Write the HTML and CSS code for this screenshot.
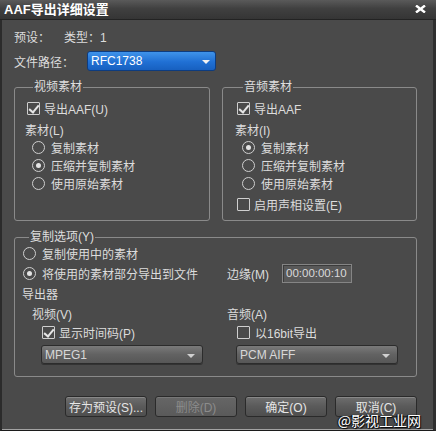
FILE: index.html
```html
<!DOCTYPE html>
<html lang="zh-CN">
<head>
<meta charset="utf-8">
<title>AAF导出详细设置</title>
<link rel="stylesheet" href="styles.css">
</head>
<body>
<div class="window">
  <div class="titlebar">
    <span class="title">AAF导出详细设置</span>
    <svg class="close" width="11" height="8" viewBox="0 0 11 8"><path d="M1 0.5 L10 7.5 M10 0.5 L1 7.5" stroke="#fff" stroke-width="2.4" fill="none"/></svg>
  </div>

  <div class="content">
    <div class="row info">
      <span class="lbl-preset">预设：</span>
      <span>类型：1</span>
    </div>
    <div class="row path">
      <span class="lbl-path">文件路径：</span>
      <div class="select select-blue"><span>RFC1738</span><i class="arrow"></i></div>
    </div>

    <div class="groups">
      <fieldset class="group group-left">
        <legend>视频素材</legend>
        <div class="opt"><span class="cb checked"></span><span>导出AAF(U)</span></div>
        <div class="opt sub">素材(L)</div>
        <div class="opt ind"><span class="rd"></span><span>复制素材</span></div>
        <div class="opt ind"><span class="rd on"></span><span>压缩并复制素材</span></div>
        <div class="opt ind"><span class="rd"></span><span>使用原始素材</span></div>
      </fieldset>
      <fieldset class="group group-right">
        <legend>音频素材</legend>
        <div class="opt"><span class="cb checked"></span><span>导出AAF</span></div>
        <div class="opt sub">素材(I)</div>
        <div class="opt ind"><span class="rd on"></span><span>复制素材</span></div>
        <div class="opt ind"><span class="rd"></span><span>压缩并复制素材</span></div>
        <div class="opt ind"><span class="rd"></span><span>使用原始素材</span></div>
        <div class="opt gap"><span class="cb"></span><span>启用声相设置(E)</span></div>
      </fieldset>
    </div>

    <fieldset class="group copy">
      <legend>复制选项(Y)</legend>
      <div class="copy-grid">
        <div class="opt wide r1"><span class="rd"></span><span>复制使用中的素材</span></div>
        <div class="opt r2"><span class="rd on"></span><span>将使用的素材部分导出到文件</span></div>
        <div class="opt r2 margin-row"><span class="lbl-margin">边缘(M)</span><span class="field">00:00:00:10</span></div>
        <div class="opt wide r2 exporter">导出器</div>
        <div class="col col-video">
          <div class="opt r2 col-lbl">视频(V)</div>
          <div class="opt col-cb"><span class="cb checked"></span><span>显示时间码(P)</span></div>
          <div class="select select-gray"><span>MPEG1</span><i class="arrow"></i></div>
        </div>
        <div class="col col-audio">
          <div class="opt r2 col-lbl">音频(A)</div>
          <div class="opt col-cb"><span class="cb"></span><span>以16bit导出</span></div>
          <div class="select select-gray"><span>PCM AIFF</span><i class="arrow"></i></div>
        </div>
      </div>
    </fieldset>

    <div class="buttons">
      <button class="btn">存为预设(S)...</button>
      <button class="btn" disabled>删除(D)</button>
      <button class="btn">确定(O)</button>
      <button class="btn">取消(C)</button>
    </div>
  </div>

  <div class="watermark">@影视工业网</div>
</div>
</body>
</html>
```

FILE: styles.css
```css
* { box-sizing: border-box; }

html, body {
  margin: 0;
  padding: 0;
  background: #4a4a4a;
}

body {
  font-family: "Liberation Sans", "Noto Sans CJK SC", sans-serif;
  font-size: 12px;
  color: #dcdcdc;
}

.window {
  position: relative;
  width: 436px;
  height: 431px;
  display: flex;
  flex-direction: column;
  background: #4a4a4a;
  border-left: 2px solid #2b2b2b;
  border-right: 3px solid #2f2f2f;
  border-bottom: 1px solid #1c1c1c;
  box-shadow: inset 0 -1px 0 #a3a3a3;
}

/* title bar */
.titlebar {
  height: 20px;
  margin: 0 -3px 0 -2px;
  padding: 0 10px 0 4px;
  display: flex;
  align-items: center;
  justify-content: space-between;
  background: linear-gradient(#5a5a5a, #404040 45%, #353535);
  border-bottom: 1px solid #232323;
}

.title {
  font-weight: bold;
  font-size: 13px;
  color: #fff;
  line-height: 19px;
}

.close { display: block; margin-top: -2px; }

/* body */
.content {
  padding: 10px 16px 0 12px;
  display: flex;
  flex-direction: column;
}

.row {
  display: flex;
  align-items: center;
}

.info { height: 16px; line-height: 16px; }
.lbl-preset { width: 50px; }

.path { height: 20px; margin-top: 5px; }
.lbl-path { width: 73px; }

/* combo boxes */
.select {
  position: relative;
  height: 20px;
  border-radius: 3px;
  display: flex;
  align-items: center;
  padding-left: 3px;
  line-height: 18px;
}

.select-blue {
  width: 129px;
  color: #fff;
  background: linear-gradient(#3f93ea, #2070d4 55%, #1760c0);
  border: 1px solid #0d3c80;
}

.select-gray {
  width: 162px;
  height: 19px;
  margin-top: 4px;
  color: #d8d8d8;
  background: linear-gradient(#7a7a7a, #626262 50%, #575757);
  border: 1px solid #2c2c2c;
  box-shadow: 0 1px 0 #333;
}

.arrow {
  position: absolute;
  right: 5px;
  top: 50%;
  margin-top: -1px;
  width: 0;
  height: 0;
  border-left: 4px solid transparent;
  border-right: 4px solid transparent;
  border-top: 4px solid #f2f2f2;
}

.select-gray .arrow { border-top-color: #d0d0d0; right: 7px; }

/* group boxes */
.groups {
  display: flex;
  gap: 12px;
  margin-top: 9px;
}

.group {
  margin: 0;
  min-width: 0;
  padding: 5px 8px 7px 12px;
  border: 1px solid #8a8a8a;
  border-radius: 3px;
}

.group legend {
  margin-left: 6px;
  padding: 0 1px;
  line-height: 14px;
  color: #dedede;
}

.group-left { flex: 0 0 196px; }
.group-right { flex: 0 0 195px; padding-left: 14px; }

.opt {
  height: 18px;
  display: flex;
  align-items: center;
  white-space: nowrap;
}

.opt.sub { margin-top: 3px; margin-left: -2px; }
.opt.ind { margin-left: 5px; }
.opt.gap { margin-top: 3px; }

/* check boxes and radio buttons */
.cb {
  position: relative;
  flex: 0 0 13px;
  width: 13px;
  height: 13px;
  margin-right: 4px;
  border: 1px solid #cfcfcf;
  border-radius: 1px;
}

.cb.checked::after {
  content: "";
  position: absolute;
  left: 3px;
  top: 0px;
  width: 4px;
  height: 8px;
  border-right: 2px solid #e6e6e6;
  border-bottom: 2px solid #e6e6e6;
  transform: rotate(40deg);
}

.rd {
  position: relative;
  flex: 0 0 13px;
  width: 13px;
  height: 13px;
  margin-right: 6px;
  border: 1px solid #cfcfcf;
  border-radius: 50%;
}

.rd.on::after {
  content: "";
  position: absolute;
  left: 3px;
  top: 3px;
  width: 5px;
  height: 5px;
  border-radius: 50%;
  background: #e4e4e4;
}

/* copy options */
.copy {
  margin-top: 9px;
  padding: 0 8px 12px 8px;
}

.copy-grid {
  display: grid;
  grid-template-columns: 204px 1fr;
}

.wide { grid-column: 1 / -1; }
.r1 { height: 19px; }
.r2 { height: 20px; }
.exporter { margin-left: -1px; }

.lbl-margin { width: 55px; }

.field {
  width: 70px;
  height: 19px;
  padding-left: 3px;
  line-height: 17px;
  font-size: 11.5px;
  color: #dadada;
  background: #595959;
  border: 1px solid #858585;
  box-shadow: inset 1px 1px 0 #3c3c3c;
}

.col { display: flex; flex-direction: column; }
.col-video .col-lbl { margin-left: 9px; }
.col-video .col-cb { margin-left: 19px; }
.col-video .select { margin-left: 18px; }
.col-audio .col-cb { margin-left: 10px; }
.col-audio .col-cb .cb { margin-right: 5px; }
.col-audio .select { margin-left: 9px; }

/* dialog buttons */
.buttons {
  display: flex;
  justify-content: flex-end;
  gap: 8px;
  margin-top: 19px;
}

.btn {
  width: 82px;
  height: 21px;
  padding: 0;
  font-family: inherit;
  font-size: 12px;
  color: #e6e6e6;
  background: linear-gradient(#6e6e6e, #5a5a5a 50%, #4e4e4e);
  border: 1px solid #2a2a2a;
  border-radius: 3px;
  box-shadow: inset 0 1px 0 #888;
}

.btn:disabled {
  color: #8c8c8c;
  background: linear-gradient(#666, #5a5a5a);
  box-shadow: inset 0 1px 0 #777;
}

/* corner watermark overlay */
.watermark {
  position: absolute;
  right: 12px;
  bottom: 1px;
  font-family: "Noto Sans CJK SC", sans-serif;
  font-size: 14px;
  line-height: 18px;
  color: #fff;
  text-shadow: 1px 1px 1px #000, -1px 0 1px #000;
}
```
